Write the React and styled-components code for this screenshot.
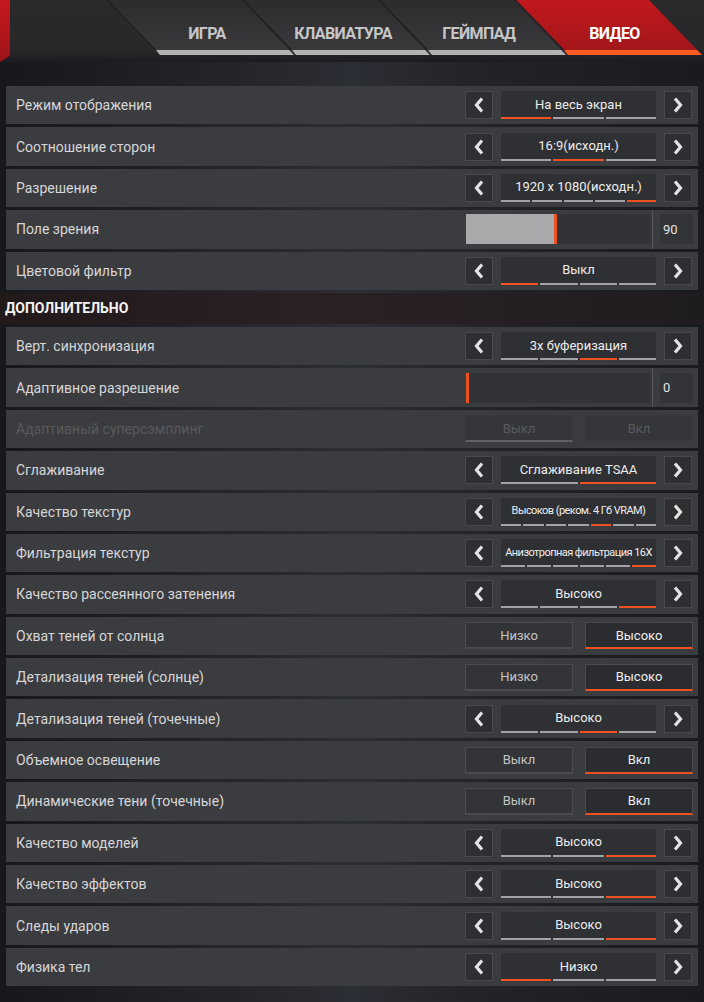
import React from "react";
import styled, { createGlobalStyle } from "styled-components";

const GlobalStyle = createGlobalStyle`
  html, body {
    margin: 0;
    padding: 0;
    background: #1b1c20;
  }
  body {
    font-family: Roboto, "Noto Sans", "DejaVu Sans", sans-serif;
  }
`;

const ORANGE = "#f0521f";

const tabs = [
  { title: "ИГРА" },
  { title: "КЛАВИАТУРА" },
  { title: "ГЕЙМПАД" },
  { title: "ВИДЕО", active: true },
];

const mainRows = [
  { label: "Режим отображения", type: "select", value: "На весь экран", count: 3, active: 0 },
  { label: "Соотношение сторон", type: "select", value: "16:9(исходн.)", count: 3, active: 1 },
  { label: "Разрешение", type: "select", value: "1920 x 1080(исходн.)", count: 5, active: 4 },
  { label: "Поле зрения", type: "slider", value: 90, fill: 49 },
  { label: "Цветовой фильтр", type: "select", value: "Выкл", count: 4, active: 0 },
];

const extraRows = [
  { label: "Верт. синхронизация", type: "select", value: "3х буферизация", count: 4, active: 2 },
  { label: "Адаптивное разрешение", type: "slider", value: 0, fill: 0 },
  { label: "Адаптивный суперсэмплинг", type: "toggle", options: ["Выкл", "Вкл"], active: 0, disabled: true },
  { label: "Сглаживание", type: "select", value: "Сглаживание TSAA", count: 2, active: 1 },
  { label: "Качество текстур", type: "select", value: "Высоков (реком. 4 Гб VRAM)", count: 7, active: 4, small: true },
  { label: "Фильтрация текстур", type: "select", value: "Анизотропная фильтрация 16X", count: 6, active: 5, small: true },
  { label: "Качество рассеянного затенения", type: "select", value: "Высоко", count: 4, active: 3 },
  { label: "Охват теней от солнца", type: "toggle", options: ["Низко", "Высоко"], active: 1 },
  { label: "Детализация теней (солнце)", type: "toggle", options: ["Низко", "Высоко"], active: 1 },
  { label: "Детализация теней (точечные)", type: "select", value: "Высоко", count: 4, active: 2 },
  { label: "Объемное освещение", type: "toggle", options: ["Выкл", "Вкл"], active: 1 },
  { label: "Динамические тени (точечные)", type: "toggle", options: ["Выкл", "Вкл"], active: 1 },
  { label: "Качество моделей", type: "select", value: "Высоко", count: 3, active: 2 },
  { label: "Качество эффектов", type: "select", value: "Высоко", count: 3, active: 2 },
  { label: "Следы ударов", type: "select", value: "Высоко", count: 3, active: 2 },
  { label: "Физика тел", type: "select", value: "Низко", count: 3, active: 0 },
];

const Chevron = ({ dir }) => (
  <svg width="10" height="16" viewBox="0 0 10 16">
    <polyline
      points={dir === "left" ? "8,1.5 2.5,8 8,14.5" : "2,1.5 7.5,8 2,14.5"}
      fill="none"
      stroke="#e4e4e4"
      strokeWidth="3.2"
    />
  </svg>
);

const Selector = ({ value, count, active, small }) => (
  <Controls>
    <ArrowBox>
      <Chevron dir="left" />
    </ArrowBox>
    <ValueBox>
      <ValueText small={small}>{value}</ValueText>
      <Bars>
        {Array.from({ length: count }).map((_, i) => (
          <Bar key={i} on={i === active ? 1 : 0} />
        ))}
      </Bars>
    </ValueBox>
    <ArrowBox>
      <Chevron dir="right" />
    </ArrowBox>
  </Controls>
);

const Slider = ({ value, fill }) => (
  <Controls>
    <Track>
      <Fill style={{ width: `${fill}%` }} />
    </Track>
    <Separator />
    <SliderValue>{value}</SliderValue>
  </Controls>
);

const Toggle = ({ options, active, disabled }) => (
  <ToggleWrap>
    {options.map((o, i) => (
      <ToggleBtn key={o} on={i === active ? 1 : 0} disabled={disabled}>
        {o}
      </ToggleBtn>
    ))}
  </ToggleWrap>
);

const SettingRow = ({ row }) => (
  <Row>
    <Label disabled={row.disabled}>{row.label}</Label>
    {row.type === "select" && <Selector {...row} />}
    {row.type === "slider" && <Slider {...row} />}
    {row.type === "toggle" && <Toggle {...row} />}
  </Row>
);

export default function App() {
  return (
    <Page>
      <GlobalStyle />
      <Header>
        <RedBar />
        <Tabs>
          {tabs.map((t) => (
            <Tab key={t.title} active={t.active}>
              <TabText active={t.active}>{t.title}</TabText>
            </Tab>
          ))}
        </Tabs>
      </Header>
      <Content>
        <Section>
          {mainRows.map((r) => (
            <SettingRow key={r.label} row={r} />
          ))}
        </Section>
        <Heading>ДОПОЛНИТЕЛЬНО</Heading>
        <Section>
          {extraRows.map((r) => (
            <SettingRow key={r.label} row={r} />
          ))}
        </Section>
      </Content>
    </Page>
  );
}

const Page = styled.div`
  width: 704px;
  height: 1002px;
  overflow: hidden;
  background: linear-gradient(
      90deg,
      #17181c 0%,
      #25262b 35%,
      #2c2e35 50%,
      #222327 70%,
      #1a1b1f 100%
    );
`;

const Header = styled.div`
  height: 62px;
  display: flex;
  align-items: flex-start;
  background: linear-gradient(
    180deg,
    #2a2a2d 0%,
    #28282b 80%,
    #1c1c20 100%
  );
  overflow: hidden;
`;

const RedBar = styled.div`
  width: 10px;
  height: 62px;
  background: linear-gradient(180deg, #c5181d, #9d1418);
  clip-path: polygon(0 0, 100% 0, 100% 90%, 0 100%);
`;

const Tabs = styled.div`
  display: flex;
  gap: 2px;
  margin-left: 150px;
`;

const Tab = styled.div`
  width: 134px;
  height: 55px;
  box-sizing: border-box;
  transform: skewX(44deg);
  transform-origin: bottom;
  border-bottom: 5px solid ${(p) => (p.active ? "#ff5b22" : "#b3b3b3")};
  border-left: 1px solid #1a1a1c;
  background: ${(p) =>
    p.active
      ? "linear-gradient(180deg, #c0191c 0%, #a3161a 100%)"
      : "linear-gradient(180deg, #2c2c2f 0%, #3a3a3d 100%)"};
  display: flex;
  justify-content: center;
  align-items: flex-end;
  padding-bottom: 7px;
`;

const TabText = styled.span`
  display: block;
  transform: skewX(-44deg);
  font-family: Roboto, "DejaVu Sans", sans-serif;
  font-weight: 700;
  font-size: 16px;
  letter-spacing: -0.6px;
  color: ${(p) => (p.active ? "#ffffff" : "#c6c6c8")};
`;

const Content = styled.div`
  padding: 24px 6px 0;
`;

const Section = styled.div`
  display: flex;
  flex-direction: column;
  gap: 3px;
`;

const Heading = styled.div`
  height: 31px;
  margin: 3px -6px;
  display: flex;
  align-items: center;
  font-weight: 700;
  font-size: 14px;
  color: #f4f4f4;
  background: linear-gradient(90deg, #22191b 0%, #2b2125 45%, #1f1c20 100%);
  padding-left: 5px;
`;

const Row = styled.div`
  height: 38.4px;
  display: flex;
  align-items: center;
  justify-content: space-between;
  padding: 0 5px 0 10px;
  background: #3b3c3f;
`;

const Label = styled.div`
  font-size: 14px;
  color: ${(p) => (p.disabled ? "#59595c" : "#d6d6d8")};
`;

const Controls = styled.div`
  width: 228px;
  height: 100%;
  display: flex;
  align-items: center;
`;

const ArrowBox = styled.div`
  width: 28px;
  height: 28px;
  box-sizing: border-box;
  border: 1px solid #48494c;
  background: #2e2f32;
  display: flex;
  align-items: center;
  justify-content: center;
`;

const ValueBox = styled.div`
  width: 155px;
  height: 28px;
  margin: 0 8px;
  background: #2f3033;
  display: flex;
  flex-direction: column;
`;

const ValueText = styled.div`
  flex: 1;
  display: flex;
  align-items: center;
  justify-content: center;
  font-size: ${(p) => (p.small ? "11px" : "13px")};
  letter-spacing: ${(p) => (p.small ? "-0.55px" : "0")};
  color: #ededed;
  white-space: nowrap;
`;

const Bars = styled.div`
  display: flex;
  gap: 2px;
  height: 2px;
`;

const Bar = styled.div`
  flex: 1;
  background: ${(p) => (p.on ? ORANGE : "#a3a3a5")};
`;

const Track = styled.div`
  flex: 1;
  height: 30px;
  margin-left: 1px;
  background: #323336;
  display: flex;
`;

const Fill = styled.div`
  height: 100%;
  box-sizing: border-box;
  background: #a9a9ab;
  border-right: 3px solid ${ORANGE};
  min-width: 3px;
`;

const Separator = styled.div`
  width: 1px;
  align-self: stretch;
  background: #55565a;
  margin: 0 7px 0 1px;
`;

const SliderValue = styled.div`
  width: 33px;
  height: 30px;
  background: #333437;
  display: flex;
  align-items: center;
  padding-left: 3px;
  box-sizing: border-box;
  font-size: 13px;
  color: #e4e4e4;
`;

const ToggleWrap = styled.div`
  width: 228px;
  display: flex;
  justify-content: space-between;
`;

const ToggleBtn = styled.div`
  width: 108px;
  height: 27px;
  box-sizing: border-box;
  border: 1px solid ${(p) => (p.disabled ? "#38393c" : "#4a4b4e")};
  border-bottom: 2px solid
    ${(p) =>
      p.on ? (p.disabled ? "#606164" : ORANGE) : p.disabled ? "#38393c" : "#4a4b4e"};
  background: ${(p) =>
    p.disabled ? "#35363a" : p.on ? "#2b2c2f" : "#333437"};
  display: flex;
  align-items: center;
  justify-content: center;
  font-size: 13px;
  color: ${(p) => (p.disabled ? "#5a5b5e" : p.on ? "#f0f0f0" : "#c4c4c6")};
`;
